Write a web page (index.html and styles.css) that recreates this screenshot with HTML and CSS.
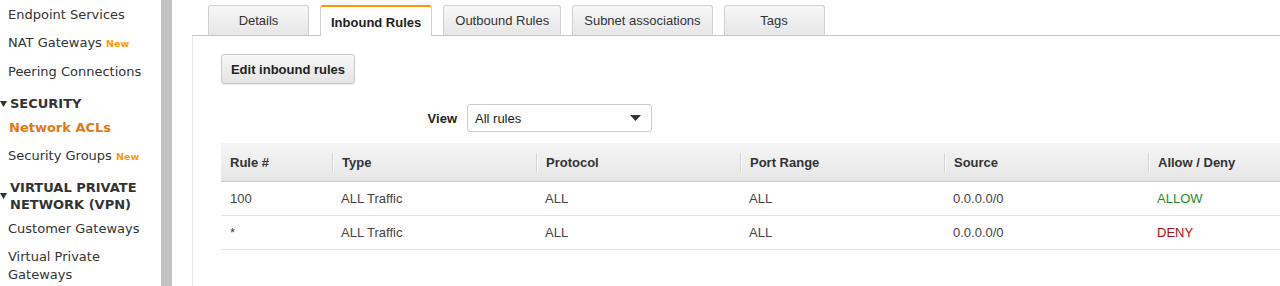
FILE: index.html
```html
<!DOCTYPE html>
<html lang="en">

<head>
	<meta charset="UTF-8">
	<title>Network ACLs</title>
	<link rel="stylesheet" href="styles.css">
</head>

<body>
	<div class="page">
		<div class="sidebar">
			<div class="nav-item">Endpoint Services</div>
			<div class="nav-item">NAT Gateways <span class="new">New</span></div>
			<div class="nav-item">Peering Connections</div>

			<div class="nav-heading nav-heading-first">
				<svg class="caret" width="7" height="6" viewBox="0 0 7 6"><path d="M0 0H7L3.5 6Z" fill="#333"/></svg>
				<span>SECURITY</span>
			</div>
			<div class="nav-item active">Network ACLs</div>
			<div class="nav-item">Security Groups <span class="new">New</span></div>

			<div class="nav-heading">
				<svg class="caret" width="7" height="6" viewBox="0 0 7 6"><path d="M0 0H7L3.5 6Z" fill="#333"/></svg>
				<span>VIRTUAL PRIVATE<br>NETWORK (VPN)</span>
			</div>
			<div class="nav-item">Customer Gateways</div>
			<div class="nav-item">Virtual Private<br>Gateways</div>
		</div>

		<div class="scroll-strip"></div>

		<div class="main">
			<div class="tabs">
				<div class="tab">Details</div>
				<div class="tab active">Inbound Rules</div>
				<div class="tab">Outbound Rules</div>
				<div class="tab">Subnet associations</div>
				<div class="tab">Tags</div>
			</div>

			<div class="content">
				<button class="btn">Edit inbound rules</button>

				<div class="view-row">
					<label class="view-label">View</label>
					<div class="select">
						<span>All rules</span>
						<svg width="11" height="6" viewBox="0 0 11 6"><path d="M0 0H11L5.5 6Z" fill="#333"/></svg>
					</div>
				</div>

				<table class="rules">
					<thead>
						<tr>
							<th class="col-rule">Rule #</th>
							<th><span class="sep"></span>Type</th>
							<th><span class="sep"></span>Protocol</th>
							<th><span class="sep"></span>Port Range</th>
							<th><span class="sep"></span>Source</th>
							<th><span class="sep"></span>Allow / Deny</th>
						</tr>
					</thead>
					<tbody>
						<tr>
							<td>100</td>
							<td>ALL Traffic</td>
							<td>ALL</td>
							<td>ALL</td>
							<td>0.0.0.0/0</td>
							<td class="allow">ALLOW</td>
						</tr>
						<tr>
							<td>*</td>
							<td>ALL Traffic</td>
							<td>ALL</td>
							<td>ALL</td>
							<td>0.0.0.0/0</td>
							<td class="deny">DENY</td>
						</tr>
					</tbody>
				</table>
			</div>
		</div>
	</div>
</body>

</html>
```

FILE: styles.css
```css
body {
	margin: 0;
	background-color: #fff;
	overflow: hidden;
}

.page {
	display: flex;
	height: 286px;
	overflow: hidden;
}

/* left navigation */
.sidebar {
	width: 161px;
	flex-shrink: 0;
	padding-top: 1px;
	font-family: "DejaVu Sans", Verdana, sans-serif;
	font-size: 13px;
	color: #333;
}

.nav-item {
	padding: 5px 0 5px 8px;
	line-height: 18px;
	white-space: nowrap;
}

.nav-item.active {
	padding-left: 9px;
	color: #e47911;
	font-weight: bold;
}

.new {
	color: #f90;
	font-size: 9.5px;
	font-weight: bold;
}

.nav-heading {
	display: flex;
	align-items: center;
	gap: 3px;
	padding: 8px 0 2px 0;
	font-weight: bold;
	line-height: 17px;
	color: #333;
	white-space: nowrap;
}

.nav-heading-first {
	padding: 9px 0 1px 0;
	line-height: 18px;
}

.caret {
	flex-shrink: 0;
}

.scroll-strip {
	width: 11px;
	flex-shrink: 0;
	background-color: #c1c1c1;
	margin-right: 20px;
}

/* main panel */
.main {
	flex: 1;
	min-width: 0;
	font-family: "Liberation Sans", Arial, sans-serif;
	font-size: 13px;
	color: #333;
}

.tabs {
	display: flex;
	gap: 11px;
	height: 30px;
	padding: 5px 0 0 16px;
	border-bottom: 1px solid #c6c6c6;
}

.tab {
	box-sizing: border-box;
	min-width: 101px;
	height: 30px;
	padding: 0 11px;
	display: flex;
	align-items: center;
	justify-content: center;
	background: linear-gradient(#f8f8f8, #e6e6e6);
	border: 1px solid #cfcfcf;
	border-bottom: none;
	border-radius: 3px 3px 0 0;
	white-space: nowrap;
}

.tab.active {
	height: 31px;
	margin-bottom: -1px;
	padding: 1px 10px 0;
	background: #fff;
	border-top: 2px solid #f90;
	font-weight: bold;
	color: #222;
}

.content {
	border-left: 1px solid #e9e9e9;
	height: 260px;
	padding: 18px 0 0 28px;
}

.btn {
	display: block;
	width: 134px;
	height: 30px;
	padding: 0;
	font-family: "Liberation Sans", Arial, sans-serif;
	font-size: 13px;
	font-weight: bold;
	color: #222;
	background: linear-gradient(#f7f7f7, #e4e4e4);
	border: 1px solid #c9c9c9;
	border-radius: 3px;
	box-shadow: 0 1px 1px rgba(0, 0, 0, 0.08);
}

.view-row {
	display: flex;
	align-items: center;
	gap: 10px;
	margin-top: 20px;
}

.view-label {
	width: 236px;
	text-align: right;
	font-weight: bold;
	color: #222;
}

.select {
	box-sizing: border-box;
	width: 185px;
	height: 28px;
	display: flex;
	align-items: center;
	justify-content: space-between;
	padding: 0 10px 0 7px;
	border: 1px solid #ccc;
	border-radius: 3px;
	background-color: #fff;
	color: #222;
}

.rules {
	margin-top: 11px;
	width: 1131px;
	border-collapse: collapse;
	table-layout: fixed;
}

.rules th {
	position: relative;
	width: 194px;
	height: 38px;
	padding: 0 0 0 10px;
	text-align: left;
	font-weight: bold;
	color: #333;
	background: linear-gradient(#f6f6f6, #e6e6e6);
	border-bottom: 1px solid #cdcdcd;
	box-shadow: 0 1px 1px rgba(0, 0, 0, 0.06);
	white-space: nowrap;
}

.rules th.col-rule {
	width: 102px;
	padding-left: 9px;
}

.sep {
	position: absolute;
	left: 0;
	top: 10px;
	height: 19px;
	border-left: 1px solid #d4d4d4;
	border-right: 1px solid #fafafa;
}

.rules td {
	height: 33px;
	padding: 0 0 0 9px;
	color: #444;
	border-bottom: 1px solid #e3e3e3;
}

.rules .allow {
	color: #1f8a2f;
}

.rules .deny {
	color: #a50f0f;
}
```
